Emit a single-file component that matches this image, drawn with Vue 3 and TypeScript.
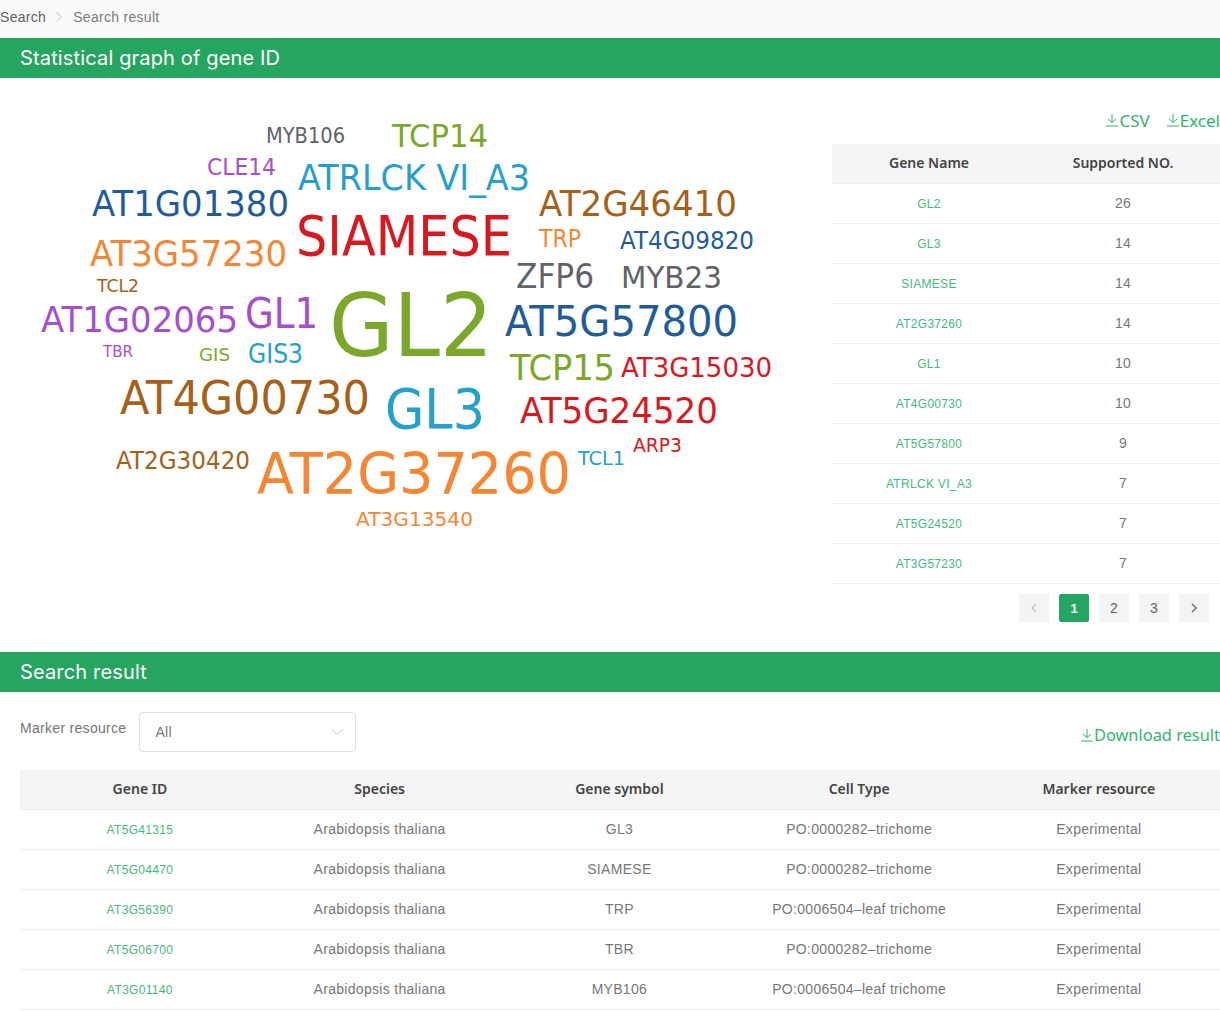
<script setup lang="ts">
interface CloudWord {
  text: string
  x: number
  y: number
  w: number
  size: number
  color: string
}

const blue = '#1f5c99'
const cyan = '#259fcb'
const red = '#d7191f'
const orange = '#f58634'
const brown = '#a5611a'
const purple = '#a64fcb'
const green = '#7ba82b'
const gray = '#5f6368'

const words: CloudWord[] = [
  { text: 'MYB106', x: 266, y: 143, w: 79, size: 21, color: gray },
  { text: 'TCP14', x: 392, y: 147, w: 96, size: 32, color: green },
  { text: 'CLE14', x: 207, y: 175, w: 69, size: 23, color: purple },
  { text: 'ATRLCK VI_A3', x: 298, y: 190, w: 232, size: 36, color: cyan },
  { text: 'AT1G01380', x: 92, y: 216, w: 197, size: 36, color: blue },
  { text: 'SIAMESE', x: 296, y: 255, w: 216, size: 56, color: red },
  { text: 'AT2G46410', x: 539, y: 216, w: 198, size: 36, color: brown },
  { text: 'TRP', x: 539, y: 247, w: 42, size: 25, color: orange },
  { text: 'AT4G09820', x: 620, y: 249, w: 134, size: 25, color: blue },
  { text: 'AT3G57230', x: 90, y: 266, w: 197, size: 36, color: orange },
  { text: 'ZFP6', x: 516, y: 288, w: 78, size: 34, color: gray },
  { text: 'MYB23', x: 621, y: 288, w: 101, size: 31, color: gray },
  { text: 'TCL2', x: 97, y: 292, w: 42, size: 17, color: brown },
  { text: 'AT1G02065', x: 41, y: 332, w: 197, size: 36, color: purple },
  { text: 'GL1', x: 245, y: 328, w: 73, size: 43, color: purple },
  { text: 'GL2', x: 329, y: 356, w: 164, size: 88, color: green },
  { text: 'AT5G57800', x: 505, y: 336, w: 233, size: 42, color: blue },
  { text: 'TBR', x: 103, y: 357, w: 30, size: 16, color: purple },
  { text: 'GIS', x: 199, y: 361, w: 31, size: 18, color: green },
  { text: 'GIS3', x: 248, y: 363, w: 55, size: 26, color: cyan },
  { text: 'TCP15', x: 510, y: 380, w: 105, size: 35, color: green },
  { text: 'AT3G15030', x: 621, y: 377, w: 151, size: 27, color: red },
  { text: 'AT4G00730', x: 120, y: 414, w: 250, size: 46, color: brown },
  { text: 'GL3', x: 385, y: 428, w: 100, size: 55, color: cyan },
  { text: 'AT5G24520', x: 520, y: 423, w: 198, size: 36, color: red },
  { text: 'AT2G30420', x: 116, y: 469, w: 134, size: 24, color: brown },
  { text: 'AT2G37260', x: 257, y: 494, w: 314, size: 57, color: orange },
  { text: 'TCL1', x: 578, y: 465, w: 47, size: 20, color: cyan },
  { text: 'ARP3', x: 633, y: 452, w: 49, size: 20, color: red },
  { text: 'AT3G13540', x: 356, y: 526, w: 117, size: 20, color: orange },
]

const genes: [string, number][] = [
  ['GL2', 26],
  ['GL3', 14],
  ['SIAMESE', 14],
  ['AT2G37260', 14],
  ['GL1', 10],
  ['AT4G00730', 10],
  ['AT5G57800', 9],
  ['ATRLCK VI_A3', 7],
  ['AT5G24520', 7],
  ['AT3G57230', 7],
]

const results = [
  { id: 'AT5G41315', symbol: 'GL3', cell: 'PO:0000282–trichome' },
  { id: 'AT5G04470', symbol: 'SIAMESE', cell: 'PO:0000282–trichome' },
  { id: 'AT3G56390', symbol: 'TRP', cell: 'PO:0006504–leaf trichome' },
  { id: 'AT5G06700', symbol: 'TBR', cell: 'PO:0000282–trichome' },
  { id: 'AT3G01140', symbol: 'MYB106', cell: 'PO:0006504–leaf trichome' },
]
</script>

<template>
  <div class="page">
    <nav class="crumbs">
      <span class="crumb-first">Search</span>
      <svg class="crumb-sep" viewBox="0 0 8 12" width="8" height="12">
        <path d="M1.5 1.5 6.5 6l-5 4.5" fill="none" stroke="#bbb" stroke-width="1" />
      </svg>
      <span>Search result</span>
    </nav>

    <h2 class="bar">Statistical graph of gene ID</h2>

    <section class="stats">
      <svg class="cloud" viewBox="0 78 832 574" width="832" height="574">
        <text
          v-for="word in words"
          :key="word.text"
          :x="word.x"
          :y="word.y"
          :font-size="word.size"
          :fill="word.color"
          :textLength="word.w"
          lengthAdjust="spacingAndGlyphs"
        >{{ word.text }}</text>
      </svg>

      <div class="side">
        <div class="links">
          <a class="dl">
            <svg class="dl-icon" viewBox="0 0 14 14" width="14" height="14">
              <path d="M7 1v8.5M3 6l4 3.6L11 6M1 13h12" fill="none" stroke="currentColor" stroke-width="1" />
            </svg>CSV
          </a>
          <a class="dl">
            <svg class="dl-icon" viewBox="0 0 14 14" width="14" height="14">
              <path d="M7 1v8.5M3 6l4 3.6L11 6M1 13h12" fill="none" stroke="currentColor" stroke-width="1" />
            </svg>Excel
          </a>
        </div>

        <div class="row head two">
          <div>Gene Name</div>
          <div>Supported NO.</div>
        </div>
        <div v-for="gene in genes" :key="gene[0]" class="row two">
          <div class="gene-link">{{ gene[0] }}</div>
          <div class="num">{{ gene[1] }}</div>
        </div>

        <div class="pager">
          <button class="page-btn">
            <svg viewBox="0 0 8 12" width="8" height="12">
              <path d="M6 2 2 6l4 4" fill="none" stroke="#c0c4cc" stroke-width="1.4" />
            </svg>
          </button>
          <button class="page-btn active">1</button>
          <button class="page-btn">2</button>
          <button class="page-btn">3</button>
          <button class="page-btn">
            <svg viewBox="0 0 8 12" width="8" height="12">
              <path d="m2 2 4 4-4 4" fill="none" stroke="#666" stroke-width="1.4" />
            </svg>
          </button>
        </div>
      </div>
    </section>

    <h2 class="bar">Search result</h2>

    <section class="results">
      <div class="filter">
        <label class="filter-label">Marker resource</label>
        <div class="select">
          <span>All</span>
          <svg viewBox="0 0 12 8" width="12" height="8">
            <path d="m1 1.5 5 5 5-5" fill="none" stroke="#c0c4cc" stroke-width="1" />
          </svg>
        </div>
        <a class="dl download">
          <svg class="dl-icon" viewBox="0 0 14 14" width="14" height="14">
            <path d="M7 1v8.5M3 6l4 3.6L11 6M1 13h12" fill="none" stroke="currentColor" stroke-width="1" />
          </svg>Download result
        </a>
      </div>

      <div class="row head five">
        <div>Gene ID</div>
        <div>Species</div>
        <div>Gene symbol</div>
        <div>Cell Type</div>
        <div>Marker resource</div>
      </div>
      <div v-for="item in results" :key="item.id" class="row five">
        <div class="gene-link">{{ item.id }}</div>
        <div>Arabidopsis thaliana</div>
        <div>{{ item.symbol }}</div>
        <div>{{ item.cell }}</div>
        <div>Experimental</div>
      </div>
    </section>
  </div>
</template>

<style scoped>
.page {
  width: 1220px;
  overflow: hidden;
  background: #fff;
  font-family: "Liberation Sans", Arial, sans-serif;
  font-size: 14px;
  letter-spacing: 0.3px;
  color: #777;
}

.crumbs {
  height: 38px;
  display: flex;
  align-items: center;
  gap: 10px;
  padding-bottom: 5px;
  box-sizing: border-box;
  background: #fafafa;
  color: #7a7a7a;
}

.crumb-first {
  color: #606060;
}

.crumb-sep {
  margin: 0 0 0 -1px;
}

.bar {
  margin: 0;
  height: 40px;
  line-height: 40px;
  padding-left: 20px;
  background: #26a560;
  color: #fff;
  font-family: Inter, "Liberation Sans", sans-serif;
  font-size: 20px;
  font-weight: 400;
  letter-spacing: 0.15px;
}

.stats {
  display: flex;
  height: 574px;
}

.cloud {
  flex: none;
  display: block;
  font-family: "DejaVu Sans", sans-serif;
  letter-spacing: 0;
}

.side {
  width: 388px;
  padding-top: 32px;
  box-sizing: border-box;
}

.links {
  display: flex;
  justify-content: flex-end;
  gap: 16px;
  height: 20px;
  margin-bottom: 14px;
}

.dl {
  display: inline-flex;
  align-items: center;
  font-family: "Noto Sans", sans-serif;
  font-size: 17px;
  letter-spacing: 0;
  color: #2fb56e;
}

.dl-icon {
  flex: none;
}

.row {
  display: grid;
  height: 40px;
  padding-bottom: 2px;
  align-items: center;
  text-align: center;
  border-bottom: 1px solid #ebeef5;
  box-sizing: border-box;
}

.two {
  grid-template-columns: 194px 194px;
}

.five {
  grid-template-columns: repeat(5, 239.75px);
}

.head {
  background: #f5f5f5;
  border-bottom-color: #eee;
  font-family: "Noto Sans", sans-serif;
  font-size: 14px;
  font-weight: 600;
  letter-spacing: 0;
  color: #444;
}

.gene-link {
  margin-top: 2px;
  font-size: 12px;
  color: #46b97c;
}

.num {
  font-size: 14px;
}

.pager {
  display: flex;
  justify-content: flex-end;
  gap: 10px;
  padding: 10px 11px 0 0;
}

.page-btn {
  width: 30px;
  height: 28px;
  padding: 0;
  display: flex;
  align-items: center;
  justify-content: center;
  border: none;
  border-radius: 2px;
  background: #f4f4f5;
  font-family: "Liberation Sans", Arial, sans-serif;
  font-size: 14px;
  color: #606266;
}

.page-btn.active {
  background: #26a560;
  font-size: 13px;
  font-weight: 700;
  color: #fff;
}

.results {
  padding: 20px 0 0 20px;
}

.filter {
  display: flex;
  align-items: flex-start;
  height: 58px;
}

.filter-label {
  margin: 8px 13px 0 0;
  line-height: 16px;
  color: #70757a;
}

.select {
  width: 217px;
  height: 40px;
  display: flex;
  align-items: center;
  justify-content: space-between;
  padding: 0 12px 0 15px;
  box-sizing: border-box;
  border: 1px solid #dcdfe6;
  border-radius: 4px;
}

.download {
  margin: 11px 0 0 auto;
  font-size: 16.4px;
}
</style>
